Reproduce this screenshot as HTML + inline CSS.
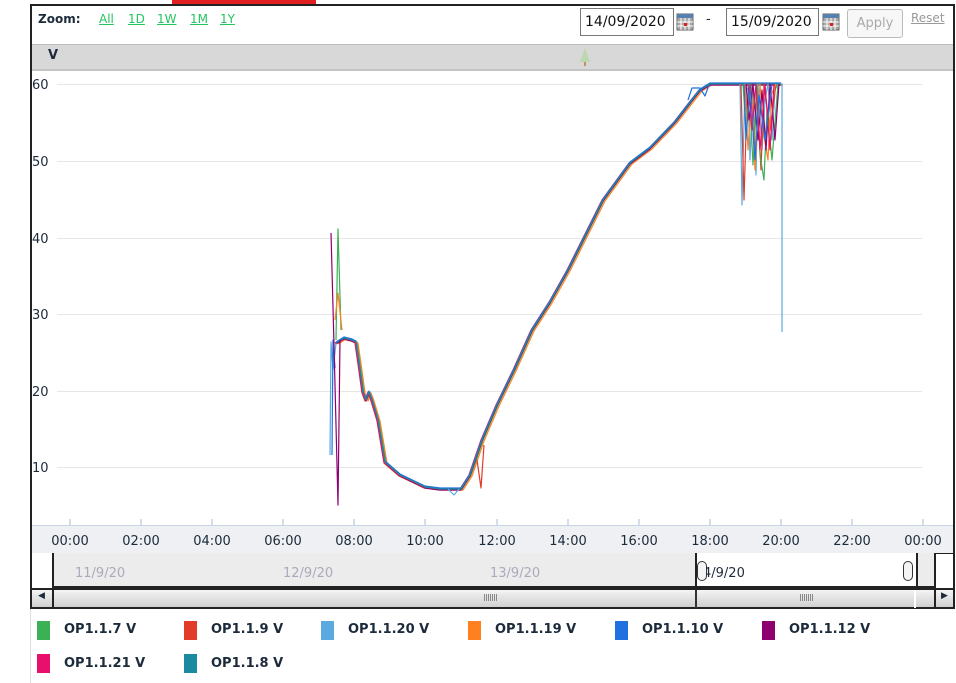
<!DOCTYPE html>
<html><head><style>
*{margin:0;padding:0;box-sizing:border-box}
body{width:956px;height:683px;background:#fff;font-family:"DejaVu Sans","Liberation Sans",sans-serif;position:relative;overflow:hidden;color:#1c2a3a}
.a{position:absolute}
.z{font-size:12px;color:#22c55e;text-decoration:underline}
.inp{position:absolute;height:28px;border:1px solid #777;background:#fff;font-size:14px;line-height:26px;padding-left:4px;color:#111}
.leg{position:absolute;font-size:13px;font-weight:bold;color:#1c2a3a}
.sw{position:absolute;width:13px;height:19px}
</style></head><body>
<div class="a" style="left:172px;top:0;width:144px;height:4px;background:#e02020"></div>
<div class="a" style="left:30px;top:4px;width:925px;height:550px;border:2px solid #222;border-bottom:1px solid #222"></div>
<div class="a" style="left:38px;top:12px;font-size:12px;font-weight:bold">Zoom:</div>
<span class="a z" style="left:99px;top:12px">All</span>
<span class="a z" style="left:128px;top:12px">1D</span>
<span class="a z" style="left:157px;top:12px">1W</span>
<span class="a z" style="left:190px;top:12px">1M</span>
<span class="a z" style="left:220px;top:12px">1Y</span>
<div class="inp" style="left:580px;top:8px;width:94px">14/09/2020</div>
<div class="inp" style="left:726px;top:8px;width:93px">15/09/2020</div>
<svg class="a" style="left:676px;top:13px" width="18" height="18"><rect x="1" y="1" width="16" height="16" fill="#aaa" stroke="#666"/><rect x="1" y="1" width="16" height="4" fill="#5580b0"/><g stroke="#fff" stroke-width="1"><path d="M1 9H17M1 13H17M5 5V17M9 5V17M13 5V17"/></g><rect x="8" y="10" width="3" height="3" fill="#e02020"/></svg>
<svg class="a" style="left:822px;top:13px" width="18" height="18"><rect x="1" y="1" width="16" height="16" fill="#aaa" stroke="#666"/><rect x="1" y="1" width="16" height="4" fill="#5580b0"/><g stroke="#fff" stroke-width="1"><path d="M1 9H17M1 13H17M5 5V17M9 5V17M13 5V17"/></g><rect x="8" y="10" width="3" height="3" fill="#e02020"/></svg>
<div class="a" style="left:706px;top:12px;font-size:13px">-</div>
<div class="a" style="left:847px;top:9px;width:56px;height:29px;border:1px solid #bbb;border-radius:3px;background:#f7f7f7;color:#aaa;font-size:13px;text-align:center;line-height:27px">Apply</div>
<div class="a" style="left:911px;top:11px;font-size:12px;color:#999;text-decoration:underline">Reset</div>
<div class="a" style="left:32px;top:44px;width:921px;height:27px;background:#d8d8d8;border-top:1px solid #bbb;border-bottom:2px solid #c4c4c4"></div>
<div class="a" style="left:48px;top:48px;font-size:13px;font-weight:bold">V</div>
<svg class="a" style="left:577px;top:46px" width="16" height="22"><path d="M8 2L13 16H3Z" fill="#bcd8b0"/><rect x="7" y="16" width="2" height="4" fill="#c89060"/></svg>
<svg class="a" style="left:0;top:0" width="956" height="683">
<g stroke="#e6e6e6" stroke-width="1">
<path d="M57 84.5H922M57 161.5H922M57 238.5H922M57 314.5H922M57 391.5H922M57 467.5H922"/>
</g>
<g font-size="13" fill="#1c2a3a" font-family="DejaVu Sans,Liberation Sans,sans-serif">
<text x="32" y="89">60</text><text x="32" y="166">50</text><text x="32" y="243">40</text><text x="32" y="319">30</text><text x="32" y="396">20</text><text x="32" y="472">10</text>
</g>
<rect x="32" y="525" width="921" height="28" fill="#eef0f4"/>
<path d="M32 525.5H953" stroke="#c8d4e4"/>
<g stroke="#a8bcd4"><path d="M70 519V525M141 519V525M212 519V525M283 519V525M354 519V525M425 519V525M497 519V525M568 519V525M639 519V525M710 519V525M781 519V525M852 519V525M923 519V525"/></g>
<g font-size="13" fill="#1c2a3a" text-anchor="middle" font-family="DejaVu Sans,Liberation Sans,sans-serif">
<text x="70" y="545">00:00</text><text x="141" y="545">02:00</text><text x="212" y="545">04:00</text><text x="283" y="545">06:00</text><text x="354" y="545">08:00</text><text x="425" y="545">10:00</text><text x="497" y="545">12:00</text><text x="568" y="545">14:00</text><text x="639" y="545">16:00</text><text x="710" y="545">18:00</text><text x="781" y="545">20:00</text><text x="852" y="545">22:00</text><text x="923" y="545">00:00</text>
</g>
<defs><path id="m" d="M336 343L344 338L352 340L356 342L360 370L363 392L366 400L369 392L372 400L378 420L385 462L400 475L425 487L440 489L461 489L470 475L482 440L497 405L514 370L532 330L550 302L568 270L603 200L630 163L650 148L675 122L692 100L700 90L710 84L781 84"/></defs>
<g fill="none" stroke-width="1.2" stroke-linejoin="round">
<use href="#m" stroke="#3cb054" transform="translate(1,0)"/>
<use href="#m" stroke="#e03c28" transform="translate(-1,1)"/>
<use href="#m" stroke="#ff8020" transform="translate(2,1)"/>
<use href="#m" stroke="#8c0070" transform="translate(0,1)"/>
<use href="#m" stroke="#e8106c" transform="translate(-1,0)"/>
<use href="#m" stroke="#2070e0" transform="translate(0,-1)"/>
<use href="#m" stroke="#1a8aa0"/>
<path d="M330 455L331 342L333 370L336 343" stroke="#5aaae0"/>
<path d="M332 455L333 340L335 368" stroke="#2070e0"/>
<path d="M331 233L334 345L338 505L340 340" stroke="#8c0070"/>
<path d="M336 340L338 229L341 330" stroke="#3cb054"/>
<path d="M335 320L338 293L342 330" stroke="#ff8020"/>
<path d="M477 460L481 488L484 445" stroke="#e03c28"/>
<path d="M448 489L454 495L459 489" stroke="#5aaae0"/>
<path d="M740 84L742 205L745 84L748 90L750 160L753 84L756 175L758 84L762 150L765 100L768 84L772 140L775 90L778 84" stroke="#5aaae0"/>
<path d="M741 84L744 200L747 100L751 84L754 150L757 90L761 170L764 84L770 130L776 84" stroke="#e03c28"/>
<path d="M743 84L746 130L749 84L753 165L757 84L760 155L764 180L767 110L772 160L778 84" stroke="#3cb054"/>
<path d="M745 84L748 150L752 88L755 170L760 84L763 130L768 160L771 95L776 84" stroke="#ff8020"/>
<path d="M746 84L749 120L753 84L758 140L762 90L766 150L770 84L775 140L779 84" stroke="#8c0070"/>
<path d="M748 84L752 130L756 84L760 150L765 84L770 150L774 84" stroke="#e8106c"/>
<path d="M744 84L746 140L750 84L755 160L759 95L765 140L772 84" stroke="#2070e0"/>
<path d="M688 100L692 88L700 88L705 96L709 85" stroke="#2070e0"/>
<path d="M780 84L782 84L782 332" stroke="#5aaae0"/>
</g>
</svg>
<div class="a" style="left:30px;top:553px;width:23px;height:36px;background:#fff;border-left:2px solid #222"></div>
<div class="a" style="left:52px;top:553px;width:645px;height:35px;background:#ececec;border:2px solid #222;border-top:none"></div>
<div class="a" style="left:697px;top:553px;width:219px;height:35px;background:#fff;border-bottom:2px solid #222"></div>
<div class="a" style="left:916px;top:553px;width:20px;height:35px;background:#ececec;border:2px solid #222;border-top:none"></div>
<div class="a" style="left:936px;top:553px;width:19px;height:36px;border-right:2px solid #222"></div>
<div class="a" style="left:75px;top:566px;font-size:13px;color:#aab">11/9/20</div>
<div class="a" style="left:283px;top:566px;font-size:13px;color:#aab">12/9/20</div>
<div class="a" style="left:490px;top:566px;font-size:13px;color:#aab">13/9/20</div>
<div class="a" style="left:703px;top:566px;font-size:13px;color:#1c2a3a">4/9/20</div>
<div class="a" style="left:697px;top:561px;width:10px;height:20px;border:1px solid #333;border-radius:5px;background:#f4f4f4"></div>
<div class="a" style="left:903px;top:561px;width:10px;height:20px;border:1px solid #333;border-radius:5px;background:#f4f4f4"></div>
<div class="a" style="left:30px;top:588px;width:925px;height:21px;background:linear-gradient(#f4f4f4,#d0d0d0);border:2px solid #222"></div>
<div class="a" style="left:52px;top:588px;width:2px;height:21px;background:#222"></div>
<div class="a" style="left:695px;top:590px;width:2px;height:18px;background:#333"></div>
<div class="a" style="left:914px;top:590px;width:2px;height:18px;background:#fff"></div>
<div class="a" style="left:934px;top:588px;width:2px;height:21px;background:#222"></div>
<div class="a" style="left:38px;top:591px;font-size:9px">◀</div>
<div class="a" style="left:941px;top:591px;font-size:9px">▶</div>
<div class="a" style="left:484px;top:594px;width:14px;height:7px;background:repeating-linear-gradient(90deg,#888 0 1px,transparent 1px 2px)"></div>
<div class="a" style="left:800px;top:594px;width:14px;height:7px;background:repeating-linear-gradient(90deg,#888 0 1px,transparent 1px 2px)"></div>
<div class="a" style="left:30px;top:609px;width:1px;height:74px;background:#ddd"></div>
<div class="sw" style="left:37px;top:621px;background:#3cb054"></div><div class="leg" style="left:64px;top:622px">OP1.1.7 V</div>
<div class="sw" style="left:184px;top:621px;background:#e03c28"></div><div class="leg" style="left:211px;top:622px">OP1.1.9 V</div>
<div class="sw" style="left:321px;top:621px;background:#5aaae0"></div><div class="leg" style="left:348px;top:622px">OP1.1.20 V</div>
<div class="sw" style="left:468px;top:621px;background:#ff8020"></div><div class="leg" style="left:495px;top:622px">OP1.1.19 V</div>
<div class="sw" style="left:615px;top:621px;background:#2070e0"></div><div class="leg" style="left:642px;top:622px">OP1.1.10 V</div>
<div class="sw" style="left:762px;top:621px;background:#8c0070"></div><div class="leg" style="left:789px;top:622px">OP1.1.12 V</div>
<div class="sw" style="left:37px;top:654px;background:#e8106c"></div><div class="leg" style="left:64px;top:656px">OP1.1.21 V</div>
<div class="sw" style="left:184px;top:654px;background:#1a8aa0"></div><div class="leg" style="left:211px;top:656px">OP1.1.8 V</div>
</body></html>
